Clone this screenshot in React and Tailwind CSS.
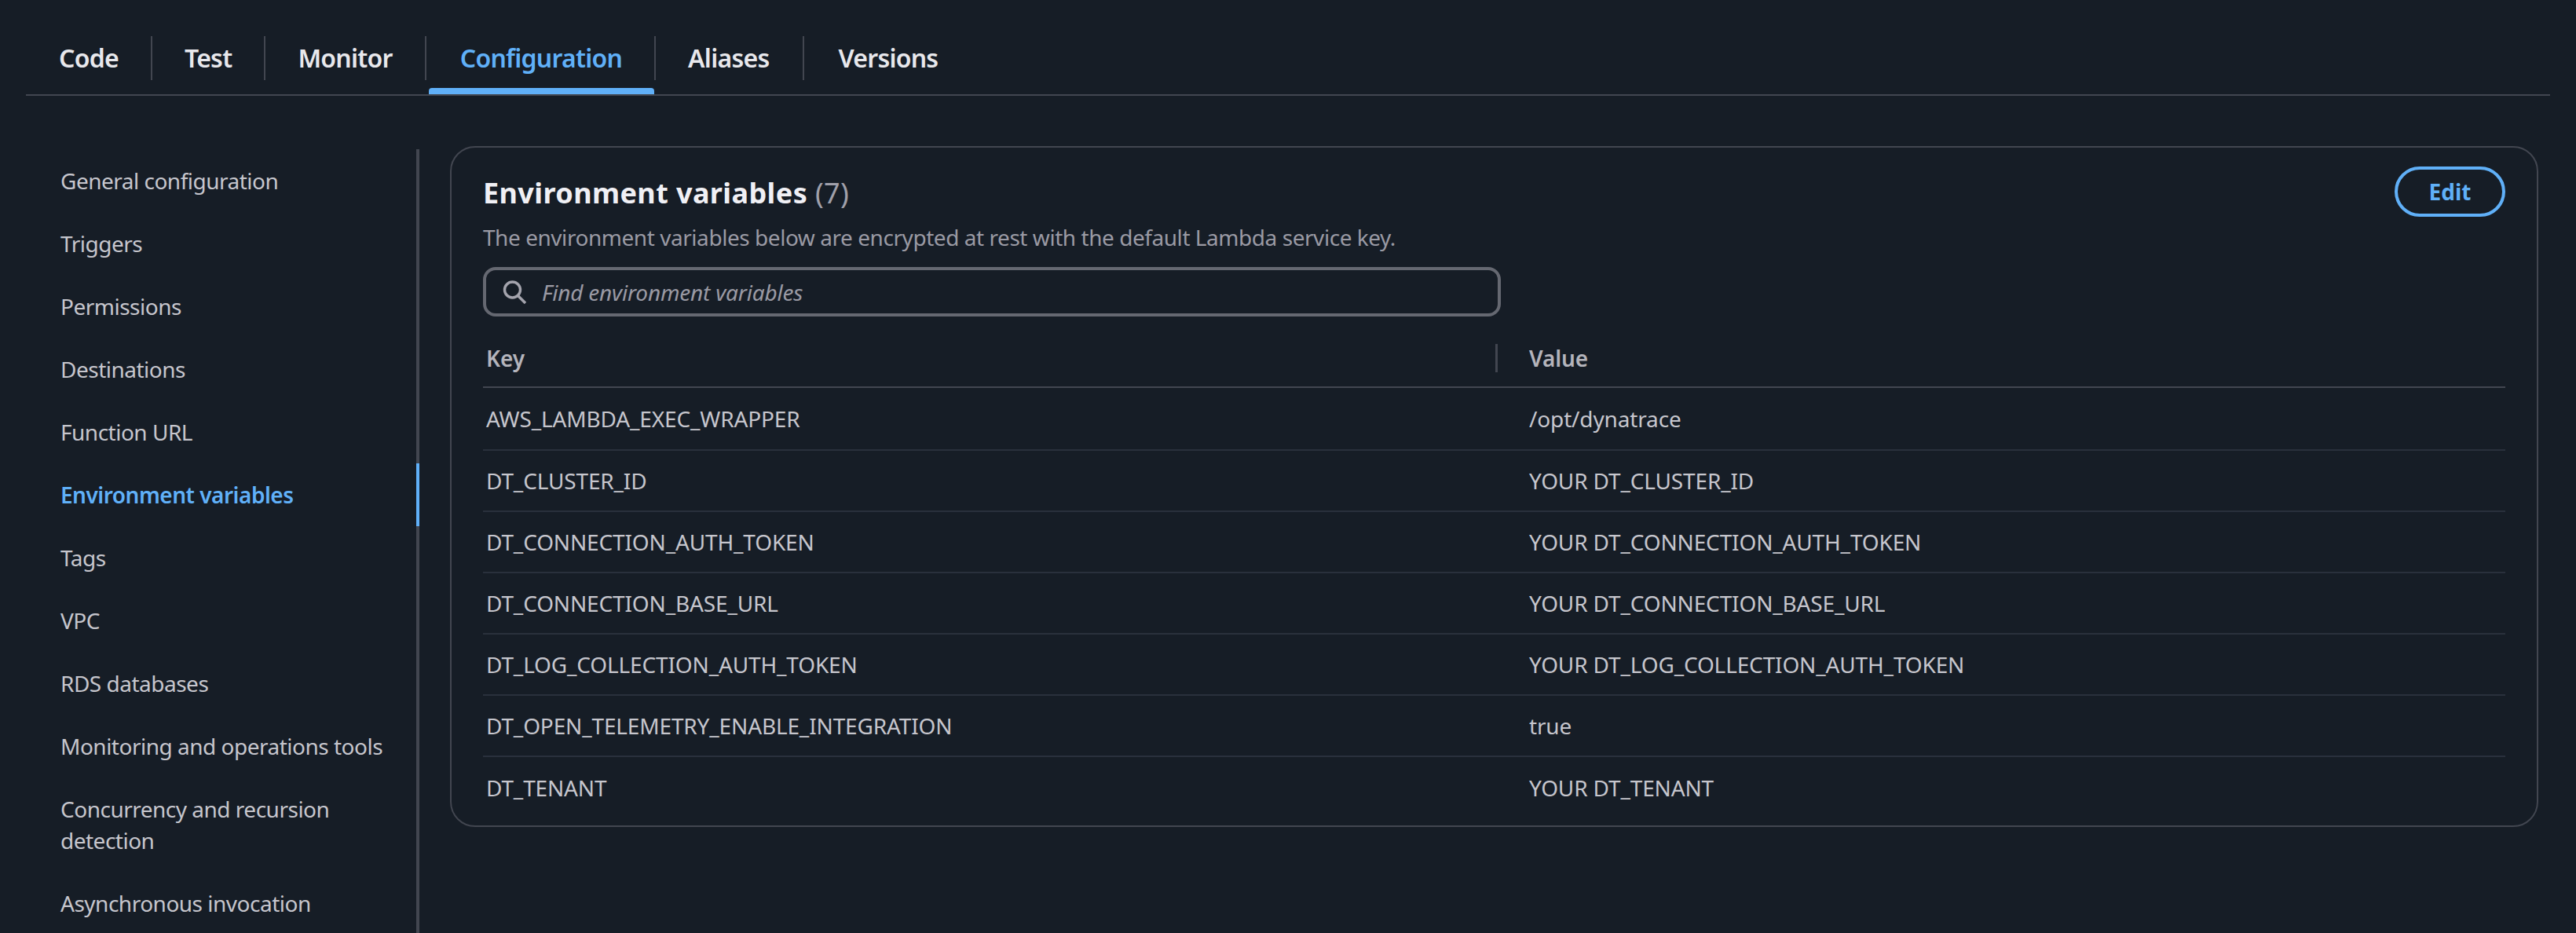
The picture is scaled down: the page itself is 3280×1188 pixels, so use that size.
const tabs = ["Code", "Test", "Monitor", "Configuration", "Aliases", "Versions"];
const tabPad = ["pl-[42px] pr-[41px]", "px-[41px]", "px-[41px]", "pl-[43px] pr-[41px]", "pl-[41px] pr-[43px]", "pl-[43px] pr-[41px]"];
const side = [
  "General configuration", "Triggers", "Permissions", "Destinations", "Function URL",
  "Environment variables", "Tags", "VPC", "RDS databases", "Monitoring and operations tools",
  "Concurrency and recursion detection", "Asynchronous invocation",
];
const rows = [
  ["AWS_LAMBDA_EXEC_WRAPPER", "/opt/dynatrace"],
  ["DT_CLUSTER_ID", "YOUR DT_CLUSTER_ID"],
  ["DT_CONNECTION_AUTH_TOKEN", "YOUR DT_CONNECTION_AUTH_TOKEN"],
  ["DT_CONNECTION_BASE_URL", "YOUR DT_CONNECTION_BASE_URL"],
  ["DT_LOG_COLLECTION_AUTH_TOKEN", "YOUR DT_LOG_COLLECTION_AUTH_TOKEN"],
  ["DT_OPEN_TELEMETRY_ENABLE_INTEGRATION", "true"],
  ["DT_TENANT", "YOUR DT_TENANT"],
];

export default function App() {
  return (
    <div className="h-[1188px] w-[3280px] overflow-hidden bg-[#161d26] font-['Noto_Sans',sans-serif] text-[28px] leading-[40px] text-[#c6c6cd]">
      <div className="px-[33px] pt-[46px]">
        <div className="flex h-[76px] border-b-2 border-[#424650]">
          {tabs.map((t, i) => (
            <div key={t} className="relative h-[74px]">
              <div
                className={`flex h-[56px] items-center text-[32px] font-semibold tracking-[-0.75px] ${tabPad[i]} ${
                  i === 3 ? "text-[#60b0f8]" : "text-[#e8e8ec]"
                } ${i < 5 ? "border-r-2 border-[#424650]" : ""}`}
              >
                {t}
              </div>
              {i === 3 && <div className="absolute bottom-0 left-[3px] right-[2px] h-[8px] rounded-t-[4px] bg-[#60b0f8]" />}
            </div>
          ))}
        </div>
      </div>
      <div className="flex pl-[33px] pt-[64px]">
        <div className="mt-[4px] h-[1000px] w-[501px] shrink-0 border-r-[4px] border-[#424650] pl-[44px] tracking-[-0.5px]">
          {side.map((s, i) => (
            <div key={s} className="relative">
              <div className={`w-[420px] py-[20px] ${i === 5 ? "font-semibold text-[#60b0f8]" : ""}`}>{s}</div>
              {i === 5 && <div className="absolute right-[-4px] top-0 h-full w-[4px] bg-[#60b0f8]" />}
            </div>
          ))}
        </div>
        <div className="ml-[39px] h-[867px] w-[2659px] rounded-[32px] border-2 border-[#424650] px-[40px] pt-[24px]">
          <div className="flex items-start justify-between">
            <div className="pt-[12px]">
              <div className="text-[36px] font-bold leading-[44px] tracking-[0.4px] text-[#f0f0f5]">
                Environment variables <span className="font-normal text-[#a0a0aa]">(7)</span>
              </div>
              <div className="mt-[14px] tracking-[-0.45px] text-[#9a9aa4]">The environment variables below are encrypted at rest with the default Lambda service key.</div>
            </div>
            <button className="h-[64px] w-[141px] rounded-full border-[4px] border-[#60b0f8] text-[28px] font-bold text-[#60b0f8]">Edit</button>
          </div>
          <div className="mt-[18px] flex h-[63px] w-[1296px] items-center gap-[20px] rounded-[16px] border-[4px] border-[#656871] pl-[21px]">
            <svg width="30" height="30" viewBox="0 0 30 30" fill="none" stroke="#a4a4ad" strokeWidth="3.4">
              <circle cx="12.5" cy="12" r="10" />
              <path d="M19.5 19.5 29 29" />
            </svg>
            <span className="italic tracking-[-0.2px] text-[#9a9aa4]">Find environment variables</span>
          </div>
          <div className="mt-[16px] tracking-[-0.15px]">
            <div className="flex h-[75px] items-center border-b-2 border-[#424650] font-semibold text-[#b4b4bb]">
              <div className="w-[1289px] pl-[4px]">Key</div>
              <div className="h-[36px] w-[3px] bg-[#424650]" />
              <div className="pl-[40px]">Value</div>
            </div>
            {rows.map(([k, v], i) => (
              <div key={k} className={`flex items-center ${i === 0 ? "h-[80px]" : "h-[78px]"} ${i < 6 ? "border-b-2 border-[#29303c]" : ""}`}>
                <div className="w-[1332px] pl-[4px]">{k}</div>
                <div>{v}</div>
              </div>
            ))}
          </div>
        </div>
      </div>
    </div>
  );
}
